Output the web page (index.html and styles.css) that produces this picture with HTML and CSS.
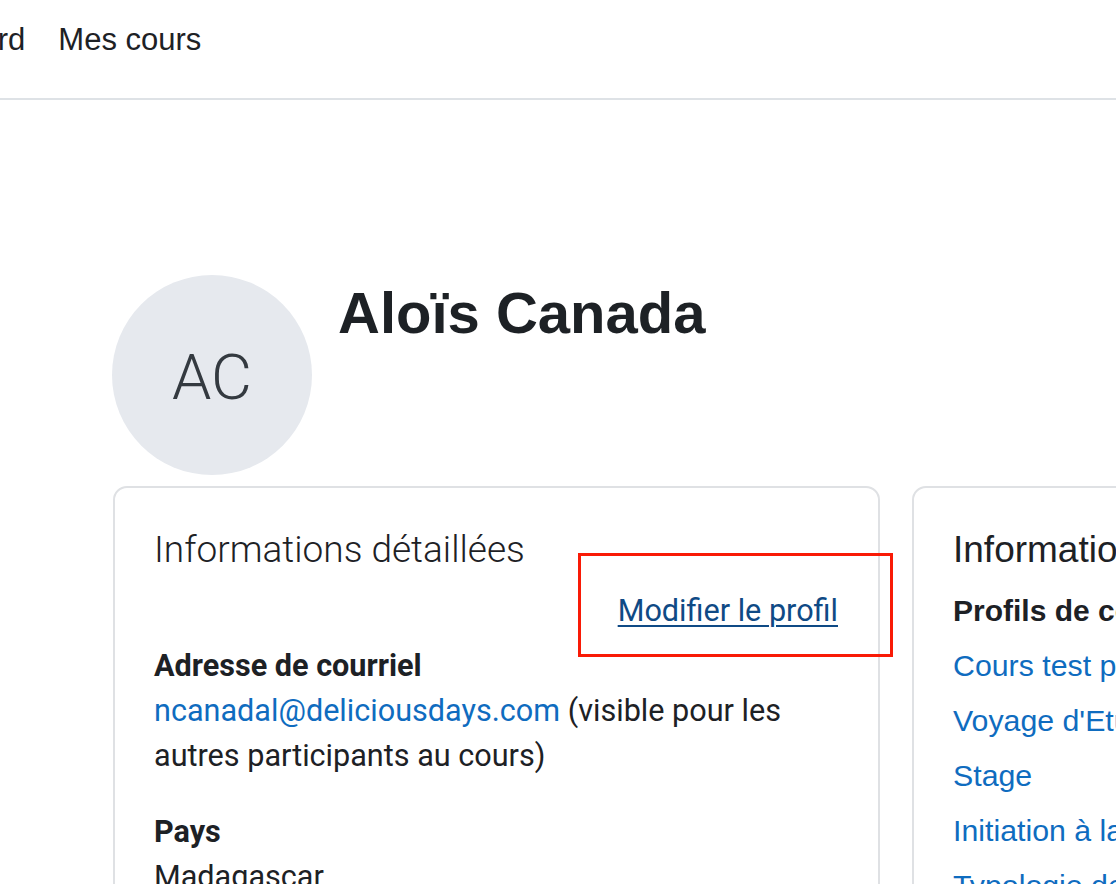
FILE: index.html
```html
<!DOCTYPE html>
<html lang="fr">
<head>
<meta charset="utf-8">
<title>Aloïs Canada : profil</title>
<link rel="stylesheet" href="styles.css">
</head>
<body>
<nav class="topnav">
  <a class="nav-item nav-first" href="#">Tableau de bord</a>
  <a class="nav-item" href="#">Mes cours</a>
</nav>
<main class="page">
  <header class="profile-head">
    <div class="avatar">AC</div>
    <h1 class="name">Aloïs Canada</h1>
  </header>
  <section class="cards">
    <div class="card card-left">
      <h3 class="card-title">Informations détaillées</h3>
      <div class="edit-row"><a class="edit-link" href="#">Modifier le profil</a></div>
      <dl class="details">
        <dt>Adresse de courriel</dt>
        <dd><a class="link" href="#">ncanadal@deliciousdays.com</a> (visible pour les autres participants au cours)</dd>
        <dt>Pays</dt>
        <dd>Madagascar</dd>
      </dl>
    </div>
    <div class="card card-right">
      <h3 class="card-title">Informations de cours</h3>
      <div class="label">Profils de cours</div>
      <ul class="course-list">
        <li><a class="link" href="#">Cours test pour la formation</a></li>
        <li><a class="link" href="#">Voyage d'Etude</a></li>
        <li><a class="link" href="#">Stage</a></li>
        <li><a class="link" href="#">Initiation à la cuisine</a></li>
        <li><a class="link" href="#">Typologie des cuisines</a></li>
      </ul>
    </div>
  </section>
</main>
<div class="highlight"></div>
</body>
</html>
```
FILE: styles.css
```css
html, body {
  margin: 0;
  padding: 0;
  background: #fff;
  overflow: hidden;
}
body {
  width: 1116px;
  height: 884px;
  position: relative;
  color: #1d2125;
  font-family: "Liberation Sans", Arial, sans-serif;
}
a { text-decoration: none; }

.topnav {
  box-sizing: border-box;
  height: 100px;
  border-bottom: 2px solid #dee2e6;
  display: flex;
  gap: 33px;
  padding-top: 17px;
  white-space: nowrap;
  overflow: hidden;
}
.nav-item {
  font-size: 31px;
  line-height: 45px;
  color: #1d2125;
}
.nav-first { margin-left: -197px; }

.page {
  padding-left: 112px;
}
.profile-head {
  display: flex;
  gap: 26px;
  margin-top: 175px;
}
.avatar {
  width: 200px;
  height: 200px;
  border-radius: 50%;
  background: #e6e9ee;
  display: flex;
  align-items: center;
  justify-content: center;
  font-family: Roboto, "Liberation Sans", sans-serif;
  font-weight: 300;
  font-size: 63px;
  color: #343a40;
  padding-top: 4px;
  box-sizing: border-box;
}
.name {
  margin: 4px 0 0;
  font-size: 58px;
  line-height: 68px;
  font-weight: 700;
}

.cards {
  display: flex;
  gap: 32px;
  margin-top: 11px;
  margin-left: 1px;
}
.card {
  flex: 0 0 auto;
  box-sizing: border-box;
  border: 2px solid #dfe1e4;
  border-radius: 14px;
  padding: 38px 40px 40px 39px;
  height: 460px;
}
.card-left {
  width: 767px;
  font-family: Roboto, "Liberation Sans", sans-serif;
}
.card-right {
  width: 420px;
}
.card-title {
  margin: 0;
  font-size: 37px;
  line-height: 47px;
  font-weight: 300;
  white-space: nowrap;
}
.card-right .card-title {
  font-family: "Liberation Sans", Arial, sans-serif;
  font-weight: 400;
  font-size: 37px;
}
.edit-row {
  display: flex;
  justify-content: flex-end;
  margin-top: 15px;
  font-size: 30.6px;
  line-height: 45px;
}
.edit-link {
  color: #0f4a85;
  text-decoration: underline;
  text-underline-offset: 4px;
  text-decoration-thickness: 2px;
}
.details {
  margin: 10px 0 0;
  font-size: 30.6px;
  line-height: 45px;
}
.details dt {
  font-weight: 700;
}
.details dd {
  margin: 0 0 31px;
}
.link {
  color: #0f6cbf;
}
.label {
  margin-top: 15px;
  font-size: 30px;
  line-height: 45px;
  font-weight: 700;
  white-space: nowrap;
}
.course-list {
  list-style: none;
  margin: 10px 0 0;
  padding: 0;
  font-size: 30.3px;
  line-height: 45px;
  white-space: nowrap;
}
.course-list li { margin-bottom: 10px; }

.highlight {
  position: absolute;
  left: 578px;
  top: 553px;
  width: 315px;
  height: 104px;
  box-sizing: border-box;
  border: 3px solid #f91a06;
}
```
